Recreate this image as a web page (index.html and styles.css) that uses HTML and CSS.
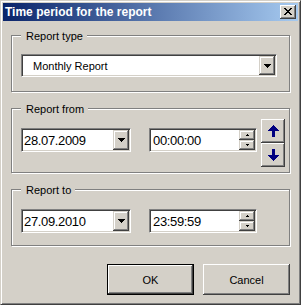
FILE: index.html
```html
<!DOCTYPE html>
<html>
<head>
<meta charset="utf-8">
<title>Time period for the report</title>
<link rel="stylesheet" href="styles.css">
</head>
<body>
<div class="window">
  <div class="caption">
    <span class="caption-title">Time period for the report</span>
    <span class="close-btn">
      <svg width="8" height="7" viewBox="0 0 8 7" shape-rendering="crispEdges"><path d="M0 0h2v1H0z M6 0h2v1H6z M1 1h2v1H1z M5 1h2v1H5z M2 2h4v1H2z M3 3h2v1H3z M2 4h4v1H2z M1 5h2v1H1z M5 5h2v1H5z M0 6h2v1H0z M6 6h2v1H6z" fill="#000"/></svg>
    </span>
  </div>
  <div class="content">
    <div class="group group-type">
      <div class="group-label">Report type</div>
      <div class="combo combo-wide">
        <span class="combo-text combo-text-list">Monthly Report</span>
        <span class="raised combo-btn">
          <svg width="7" height="4" viewBox="0 0 7 4" shape-rendering="crispEdges"><path d="M0 0h7v1H0z M1 1h5v1H1z M2 2h3v1H2z M3 3h1v1H3z" fill="#000"/></svg>
        </span>
      </div>
    </div>

    <div class="group group-from">
      <div class="group-label">Report from</div>
      <div class="row">
        <div class="combo combo-date">
          <span class="combo-text mono-digits">28.07.2009</span>
          <span class="raised combo-btn">
            <svg width="7" height="4" viewBox="0 0 7 4" shape-rendering="crispEdges"><path d="M0 0h7v1H0z M1 1h5v1H1z M2 2h3v1H2z M3 3h1v1H3z" fill="#000"/></svg>
          </span>
        </div>
        <div class="spin">
          <span class="spin-text mono-digits">00:00:00</span>
          <span class="spin-btns">
            <span class="raised spin-btn"><svg width="3" height="2" viewBox="0 0 3 2" shape-rendering="crispEdges"><path d="M1 0h1v1H1z M0 1h3v1H0z" fill="#000"/></svg></span>
            <span class="raised spin-btn"><svg width="3" height="2" viewBox="0 0 3 2" shape-rendering="crispEdges"><path d="M0 0h3v1H0z M1 1h1v1H1z" fill="#000"/></svg></span>
          </span>
        </div>
        <div class="arrows">
          <span class="raised arrow-btn">
            <svg width="11" height="12" viewBox="0 0 11 12" shape-rendering="crispEdges"><path d="M5 0h1v1H5z M4 1h3v1H4z M3 2h5v1H3z M2 3h7v1H2z M1 4h9v1H1z M0 5h11v1H0z M4 6h3v6H4z" fill="#000080"/></svg>
          </span>
          <span class="raised arrow-btn">
            <svg width="11" height="12" viewBox="0 0 11 12" shape-rendering="crispEdges"><path d="M4 0h3v6H4z M0 6h11v1H0z M1 7h9v1H1z M2 8h7v1H2z M3 9h5v1H3z M4 10h3v1H4z M5 11h1v1H5z" fill="#000080"/></svg>
          </span>
        </div>
      </div>
    </div>

    <div class="group group-to">
      <div class="group-label">Report to</div>
      <div class="row">
        <div class="combo combo-date">
          <span class="combo-text mono-digits">27.09.2010</span>
          <span class="raised combo-btn">
            <svg width="7" height="4" viewBox="0 0 7 4" shape-rendering="crispEdges"><path d="M0 0h7v1H0z M1 1h5v1H1z M2 2h3v1H2z M3 3h1v1H3z" fill="#000"/></svg>
          </span>
        </div>
        <div class="spin">
          <span class="spin-text mono-digits">23:59:59</span>
          <span class="spin-btns">
            <span class="raised spin-btn"><svg width="3" height="2" viewBox="0 0 3 2" shape-rendering="crispEdges"><path d="M1 0h1v1H1z M0 1h3v1H0z" fill="#000"/></svg></span>
            <span class="raised spin-btn"><svg width="3" height="2" viewBox="0 0 3 2" shape-rendering="crispEdges"><path d="M0 0h3v1H0z M1 1h1v1H1z" fill="#000"/></svg></span>
          </span>
        </div>
      </div>
    </div>

    <div class="buttons">
      <button class="btn btn-default">OK</button>
      <button class="btn">Cancel</button>
    </div>
  </div>
</div>
</body>
</html>
```

FILE: styles.css
```css
* { box-sizing: border-box; }

html, body {
  margin: 0;
  padding: 0;
  background: #d4d0c8;
}

body {
  font-family: "Liberation Sans", Arial, sans-serif;
  font-size: 11px;
  color: #000;
}

.window {
  width: 301px;
  height: 305px;
  background: #d4d0c8;
  border: 1px solid;
  border-color: #d4d0c8 #404040 #404040 #d4d0c8;
  box-shadow: inset 1px 1px #fff, inset -1px -1px #808080;
  padding: 2px;
  display: flex;
  flex-direction: column;
}

.caption {
  height: 18px;
  flex: none;
  display: flex;
  align-items: center;
  justify-content: space-between;
  padding: 0 2px;
  background: linear-gradient(to right, #0a246a, #a6caf0);
}

.caption-title {
  color: #fff;
  font-weight: bold;
  font-size: 12px;
  line-height: 18px;
  white-space: nowrap;
}

.close-btn {
  width: 16px;
  height: 14px;
  display: flex;
  align-items: center;
  justify-content: center;
  background: #d4d0c8;
  box-shadow: inset -1px -1px #404040, inset 1px 1px #fff, inset -2px -2px #808080, inset 2px 2px #d4d0c8;
  padding-bottom: 1px;
}

.content {
  flex: 1;
  display: flex;
  flex-direction: column;
  padding: 0 8px;
}

.group {
  border: 1px solid #808080;
  box-shadow: inset 1px 1px #fff, 1px 1px #fff;
  display: flex;
  flex-direction: column;
  align-items: flex-start;
}

.group-type { margin-top: 14px; padding-bottom: 14px; }
.group-from { margin-top: 16px; padding-bottom: 5px; }
.group-to { margin-top: 16px; padding-bottom: 12px; }

.group-label {
  margin: -6px 0 0 9px;
  padding: 0 4px 0 5px;
  background: #d4d0c8;
  line-height: 13px;
  white-space: nowrap;
}

.raised {
  background: #d4d0c8;
  box-shadow: inset -1px -1px #404040, inset 1px 1px #d4d0c8, inset -2px -2px #808080, inset 2px 2px #fff;
  display: flex;
  align-items: center;
  justify-content: center;
}

.combo, .spin {
  background: #fff;
  border: 1px solid;
  border-color: #808080 #fff #fff #808080;
  box-shadow: inset 1px 1px #404040, inset -1px -1px #d4d0c8;
  padding: 1px;
  display: flex;
}

.combo-wide {
  width: 256px;
  height: 23px;
  margin: 11px 0 0 9px;
}

.combo-text {
  flex: 1;
  display: flex;
  align-items: center;
  padding-left: 1px;
  white-space: nowrap;
}

.combo-text-list { padding-left: 10px; }

.combo-btn {
  width: 16px;
  flex: none;
}

.mono-digits {
  font-size: 13px;
  letter-spacing: -0.35px;
}

.row {
  display: flex;
  align-items: flex-start;
  margin-left: 9px;
}

.group-from .row { margin-top: 3px; }
.group-from .combo-date,
.group-from .spin { margin-top: 9px; }
.group-to .row { margin-top: 12px; }

.combo-date {
  width: 110px;
  height: 24px;
}

.spin {
  width: 108px;
  height: 24px;
  margin-left: 18px;
}

.spin-text {
  flex: 1;
  display: flex;
  align-items: center;
  padding-left: 2px;
  white-space: nowrap;
}

.spin-btns {
  width: 16px;
  flex: none;
  display: flex;
  flex-direction: column;
}

.spin-btn {
  flex: 1;
}

.arrows {
  margin-left: 4px;
  display: flex;
  flex-direction: column;
}

.arrow-btn {
  width: 24px;
  height: 24px;
  box-shadow: inset -1px -1px #404040, inset 1px 1px #fff, inset -2px -2px #808080, inset 2px 2px #d4d0c8;
}

.buttons {
  margin-top: 18px;
  display: flex;
  justify-content: flex-end;
  gap: 9px;
}

.btn {
  width: 87px;
  height: 31px;
  padding: 0;
  border: none;
  background: #d4d0c8;
  font-family: "Liberation Sans", Arial, sans-serif;
  font-size: 11px;
  color: #000;
  box-shadow: inset -1px -1px #404040, inset 1px 1px #fff, inset -2px -2px #808080, inset 2px 2px #d4d0c8;
}

.btn-default {
  border: 1px solid #000;
}
```
